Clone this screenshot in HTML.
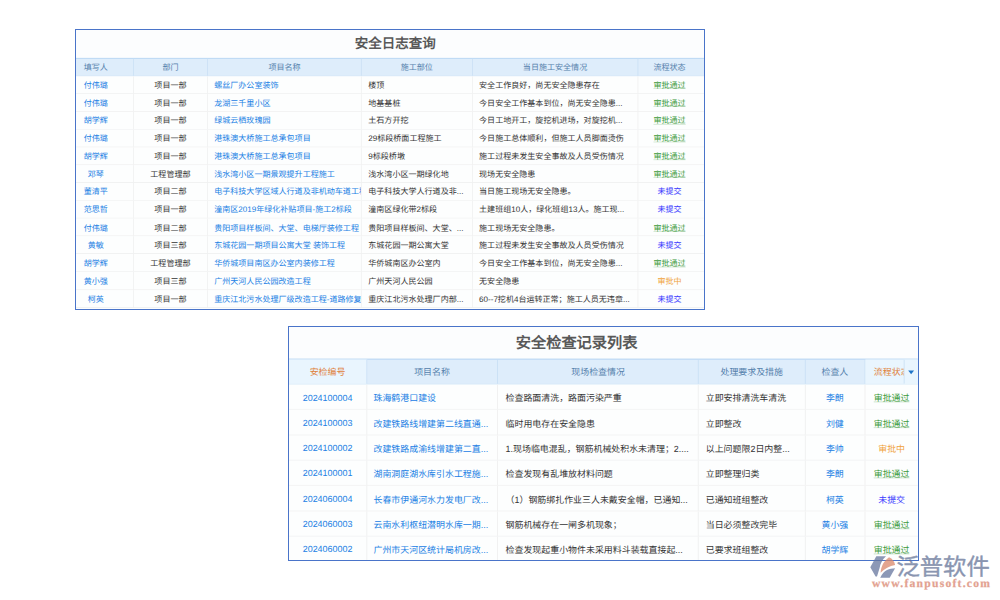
<!DOCTYPE html>
<html lang="zh-CN"><head><meta charset="utf-8"><title>安全日志查询</title>
<style>
*{box-sizing:border-box;margin:0;padding:0}
html,body{width:1000px;height:600px;background:#fff;overflow:hidden}
body{position:relative;font-family:"Liberation Sans",sans-serif;font-size:12px;color:#333;text-rendering:geometricPrecision}
.frame{position:absolute;border:1px solid #4a74c9;background:#fcfdfe;overflow:hidden}
.sc{position:absolute;left:0;top:0;transform-origin:0 0}
.title{text-align:center;font-weight:bold;color:#585858;white-space:nowrap}
.hd{display:flex;background:#deedfb;border-top:1px solid #a9cdf0;border-bottom:1px solid #d2e4f5;color:#5480ab;white-space:nowrap}
.hd .c{border-right:1px solid #c5ddf3}
.hd .c.hov{background:#e9f5fe;color:#e0813a}
.rw{display:flex;border-bottom:1px solid #ebebeb;white-space:nowrap;background:#fdfefe}
.c{flex:none;text-align:center;overflow:hidden;border-right:1px solid #ececec;position:relative}
.c:last-child{border-right:0}
.c.l{text-align:left}
.lk{color:#2180e4}
.sg{color:#3b9a3b;text-decoration:underline;text-decoration-color:rgba(59,154,59,.32);text-underline-offset:1px}
.sb{color:#3a3aff}
.so{color:#f0a23c}
.nm{position:relative;top:-0.8px}
.trg{position:absolute;right:0;top:0;bottom:0;border-left:1px solid #c5ddf3;background:#e9f5fe;display:block}
.trg b{position:absolute;left:50%;top:50%;margin:-1.9px 0 0 -4.2px;width:0;height:0;border-left:4.5px solid transparent;border-right:4.5px solid transparent;border-top:5.8px solid #1f74c8}
.wm{position:absolute;left:0;top:0;width:1000px;height:600px;pointer-events:none;opacity:.75}
.lg{position:absolute;left:866px;top:552px}
.wt{position:absolute;left:896.5px;top:553px;font-size:23.3px;line-height:28px;color:#637296;font-weight:500;white-space:nowrap;letter-spacing:0;-webkit-text-stroke:.4px #637296}
.wu{position:absolute;left:872px;top:577.1px;font-family:"Liberation Serif",serif;font-weight:bold;font-size:11.6px;line-height:13px;color:#d9836c;white-space:nowrap;letter-spacing:1.25px;-webkit-text-stroke:.25px #d9836c}
.p1 .hd{height:28.837px}.p1 .hd .c{line-height:25.261px;padding-top:1.576px}.p1 .rw{height:28.049px}.p1 .rw .c{line-height:24.843px;padding-top:2.206px}
.p2 .hd{height:35.23px}.p2 .hd .c{line-height:31.333px;padding-top:1.897px}.p2 .rw{height:34.309px}.p2 .rw .c{line-height:28.973px;padding-top:4.336px}
</style></head>
<body>
<div class="frame p1" style="left:75px;top:29px;width:630px;height:281px">
<div class="sc" style="width:989.599px;transform:scale(0.6346);font-size:12.685px">
<div class="title" style="height:44.122px;line-height:44.122px;font-size:21.3px;padding-left:16.703px">安全日志查询</div>
<div class="hd">
<div class="c" style="width:90.766px;padding-right:27.576px;">填写人</div>
<div class="c" style="width:117.082px;">部门</div>
<div class="c" style="width:242.357px;">项目名称</div>
<div class="c" style="width:174.598px;">施工部位</div>
<div class="c" style="width:261.109px;">当日施工安全情况</div>
<div class="c" style="width:103.687px;padding-right:4.727px;">流程状态</div>
</div>
<div class="rw">
<div class="c lk" style="width:90.766px;padding-right:27.576px">付伟璐</div>
<div class="c" style="width:117.082px;">项目一部</div>
<div class="c l lk" style="width:242.357px;padding-left:9.928px;padding-right:0">螺丝厂办公室装饰</div>
<div class="c l" style="width:174.598px;padding-left:10.4px;padding-right:0">楼顶</div>
<div class="c l" style="width:261.109px;padding-left:10.4px;padding-right:0">安全工作良好，尚无安全隐患存在</div>
<div class="c" style="width:103.687px;padding-right:4.727px"><span class="sg">审批通过</span></div>
</div>
<div class="rw">
<div class="c lk" style="width:90.766px;padding-right:27.576px">付伟璐</div>
<div class="c" style="width:117.082px;">项目一部</div>
<div class="c l lk" style="width:242.357px;padding-left:9.928px;padding-right:0">龙湖三千里小区</div>
<div class="c l" style="width:174.598px;padding-left:10.4px;padding-right:0">地基基桩</div>
<div class="c l" style="width:261.109px;padding-left:10.4px;padding-right:0">今日安全工作基本到位，尚无安全隐患...</div>
<div class="c" style="width:103.687px;padding-right:4.727px"><span class="sg">审批通过</span></div>
</div>
<div class="rw">
<div class="c lk" style="width:90.766px;padding-right:27.576px">胡学辉</div>
<div class="c" style="width:117.082px;">项目一部</div>
<div class="c l lk" style="width:242.357px;padding-left:9.928px;padding-right:0">绿城云栖玫瑰园</div>
<div class="c l" style="width:174.598px;padding-left:10.4px;padding-right:0">土石方开挖</div>
<div class="c l" style="width:261.109px;padding-left:10.4px;padding-right:0">今日工地开工，旋挖机进场，对旋挖机...</div>
<div class="c" style="width:103.687px;padding-right:4.727px"><span class="sg">审批通过</span></div>
</div>
<div class="rw">
<div class="c lk" style="width:90.766px;padding-right:27.576px">付伟璐</div>
<div class="c" style="width:117.082px;">项目一部</div>
<div class="c l lk" style="width:242.357px;padding-left:9.928px;padding-right:0">港珠澳大桥施工总承包项目</div>
<div class="c l" style="width:174.598px;padding-left:10.4px;padding-right:0">29标段桥面工程施工</div>
<div class="c l" style="width:261.109px;padding-left:10.4px;padding-right:0">今日施工总体顺利，但施工人员脚面烫伤</div>
<div class="c" style="width:103.687px;padding-right:4.727px"><span class="sg">审批通过</span></div>
</div>
<div class="rw">
<div class="c lk" style="width:90.766px;padding-right:27.576px">胡学辉</div>
<div class="c" style="width:117.082px;">项目一部</div>
<div class="c l lk" style="width:242.357px;padding-left:9.928px;padding-right:0">港珠澳大桥施工总承包项目</div>
<div class="c l" style="width:174.598px;padding-left:10.4px;padding-right:0">9标段桥墩</div>
<div class="c l" style="width:261.109px;padding-left:10.4px;padding-right:0">施工过程未发生安全事故及人员受伤情况</div>
<div class="c" style="width:103.687px;padding-right:4.727px"><span class="sg">审批通过</span></div>
</div>
<div class="rw">
<div class="c lk" style="width:90.766px;padding-right:27.576px">邓琴</div>
<div class="c" style="width:117.082px;">工程管理部</div>
<div class="c l lk" style="width:242.357px;padding-left:9.928px;padding-right:0">浅水湾小区一期景观提升工程施工</div>
<div class="c l" style="width:174.598px;padding-left:10.4px;padding-right:0">浅水湾小区一期绿化地</div>
<div class="c l" style="width:261.109px;padding-left:10.4px;padding-right:0">现场无安全隐患</div>
<div class="c" style="width:103.687px;padding-right:4.727px"><span class="sg">审批通过</span></div>
</div>
<div class="rw">
<div class="c lk" style="width:90.766px;padding-right:27.576px">董清平</div>
<div class="c" style="width:117.082px;">项目二部</div>
<div class="c l lk" style="width:242.357px;padding-left:9.928px;padding-right:0">电子科技大学区域人行道及非机动车道工程</div>
<div class="c l" style="width:174.598px;padding-left:10.4px;padding-right:0">电子科技大学人行道及非...</div>
<div class="c l" style="width:261.109px;padding-left:10.4px;padding-right:0">当日施工现场无安全隐患。</div>
<div class="c" style="width:103.687px;padding-right:4.727px"><span class="sb">未提交</span></div>
</div>
<div class="rw">
<div class="c lk" style="width:90.766px;padding-right:27.576px">范思哲</div>
<div class="c" style="width:117.082px;">项目一部</div>
<div class="c l lk" style="width:242.357px;padding-left:9.928px;padding-right:0">潼南区2019年绿化补贴项目-施工2标段</div>
<div class="c l" style="width:174.598px;padding-left:10.4px;padding-right:0">潼南区绿化带2标段</div>
<div class="c l" style="width:261.109px;padding-left:10.4px;padding-right:0">土建班组10人，绿化班组13人。施工现...</div>
<div class="c" style="width:103.687px;padding-right:4.727px"><span class="sb">未提交</span></div>
</div>
<div class="rw">
<div class="c lk" style="width:90.766px;padding-right:27.576px">付伟璐</div>
<div class="c" style="width:117.082px;">项目二部</div>
<div class="c l lk" style="width:242.357px;padding-left:9.928px;padding-right:0">贵阳项目样板间、大堂、电梯厅装修工程</div>
<div class="c l" style="width:174.598px;padding-left:10.4px;padding-right:0">贵阳项目样板间、大堂、...</div>
<div class="c l" style="width:261.109px;padding-left:10.4px;padding-right:0">施工现场无安全隐患。</div>
<div class="c" style="width:103.687px;padding-right:4.727px"><span class="sg">审批通过</span></div>
</div>
<div class="rw">
<div class="c lk" style="width:90.766px;padding-right:27.576px">黄敏</div>
<div class="c" style="width:117.082px;">项目三部</div>
<div class="c l lk" style="width:242.357px;padding-left:9.928px;padding-right:0">东城花园一期项目公寓大堂 装饰工程</div>
<div class="c l" style="width:174.598px;padding-left:10.4px;padding-right:0">东城花园一期公寓大堂</div>
<div class="c l" style="width:261.109px;padding-left:10.4px;padding-right:0">施工过程未发生安全事故及人员受伤情况</div>
<div class="c" style="width:103.687px;padding-right:4.727px"><span class="sb">未提交</span></div>
</div>
<div class="rw">
<div class="c lk" style="width:90.766px;padding-right:27.576px">胡学辉</div>
<div class="c" style="width:117.082px;">工程管理部</div>
<div class="c l lk" style="width:242.357px;padding-left:9.928px;padding-right:0">华侨城项目南区办公室内装修工程</div>
<div class="c l" style="width:174.598px;padding-left:10.4px;padding-right:0">华侨城南区办公室内</div>
<div class="c l" style="width:261.109px;padding-left:10.4px;padding-right:0">今日安全工作基本到位，尚无安全隐患...</div>
<div class="c" style="width:103.687px;padding-right:4.727px"><span class="sg">审批通过</span></div>
</div>
<div class="rw">
<div class="c lk" style="width:90.766px;padding-right:27.576px">黄小强</div>
<div class="c" style="width:117.082px;">项目三部</div>
<div class="c l lk" style="width:242.357px;padding-left:9.928px;padding-right:0">广州天河人民公园改造工程</div>
<div class="c l" style="width:174.598px;padding-left:10.4px;padding-right:0">广州天河人民公园</div>
<div class="c l" style="width:261.109px;padding-left:10.4px;padding-right:0">无安全隐患</div>
<div class="c" style="width:103.687px;padding-right:4.727px"><span class="so">审批中</span></div>
</div>
<div class="rw">
<div class="c lk" style="width:90.766px;padding-right:27.576px">柯英</div>
<div class="c" style="width:117.082px;">项目一部</div>
<div class="c l lk" style="width:242.357px;padding-left:9.928px;padding-right:0">重庆江北污水处理厂级改造工程-道路修复</div>
<div class="c l" style="width:174.598px;padding-left:10.4px;padding-right:0">重庆江北污水处理厂内部...</div>
<div class="c l" style="width:261.109px;padding-left:10.4px;padding-right:0">60--7挖机4台运转正常；施工人员无违章...</div>
<div class="c" style="width:103.687px;padding-right:4.727px"><span class="sb">未提交</span></div>
</div>
</div></div>
<div class="frame p2" style="left:288px;top:326px;width:631px;height:235px">
<div class="sc" style="width:852.304px;transform:scale(0.738);font-size:12.127px">
<div class="title" style="height:42.818px;line-height:40.65px;padding-top:2.168px;font-size:20.6px;padding-right:72.9px">安全检查记录列表</div>
<div class="hd">
<div class="c hov" style="width:105.515px;">安检编号</div>
<div class="c" style="width:177.642px;">项目名称</div>
<div class="c" style="width:272.358px;">现场检查情况</div>
<div class="c" style="width:144.038px;">处理要求及措施</div>
<div class="c" style="width:81.301px;">检查人</div>
<div class="c hov l" style="width:71.45px;padding-left:11.653px;padding-right:18.97px;text-overflow:clip">流程状态<i class="trg" style="width:18.862px"><b></b></i></div>
</div>
<div class="rw">
<div class="c lk" style="width:105.515px;"><span class="nm">2024100004</span></div>
<div class="c l lk" style="width:177.642px;padding-left:8.943px;padding-right:0">珠海鹤港口建设</div>
<div class="c l" style="width:272.358px;padding-left:10.298px;padding-right:0">检查路面清洗，路面污染严重</div>
<div class="c l" style="width:144.038px;padding-left:9.214px;padding-right:0">立即安排清洗车清洗</div>
<div class="c lk" style="width:81.301px;">李朗</div>
<div class="c" style="width:71.45px;"><span class="sg">审批通过</span></div>
</div>
<div class="rw">
<div class="c lk" style="width:105.515px;"><span class="nm">2024100003</span></div>
<div class="c l lk" style="width:177.642px;padding-left:8.943px;padding-right:0">改建铁路线增建第二线直通...</div>
<div class="c l" style="width:272.358px;padding-left:10.298px;padding-right:0">临时用电存在安全隐患</div>
<div class="c l" style="width:144.038px;padding-left:9.214px;padding-right:0">立即整改</div>
<div class="c lk" style="width:81.301px;">刘健</div>
<div class="c" style="width:71.45px;"><span class="sg">审批通过</span></div>
</div>
<div class="rw">
<div class="c lk" style="width:105.515px;"><span class="nm">2024100002</span></div>
<div class="c l lk" style="width:177.642px;padding-left:8.943px;padding-right:0">改建铁路成渝线增建第二直...</div>
<div class="c l" style="width:272.358px;padding-left:10.298px;padding-right:0">1.现场临电混乱，钢筋机械处积水未清理；2....</div>
<div class="c l" style="width:144.038px;padding-left:9.214px;padding-right:0">以上问题限2日内整...</div>
<div class="c lk" style="width:81.301px;">李帅</div>
<div class="c" style="width:71.45px;"><span class="so">审批中</span></div>
</div>
<div class="rw">
<div class="c lk" style="width:105.515px;"><span class="nm">2024100001</span></div>
<div class="c l lk" style="width:177.642px;padding-left:8.943px;padding-right:0">湖南洞庭湖水库引水工程施...</div>
<div class="c l" style="width:272.358px;padding-left:10.298px;padding-right:0">检查发现有乱堆放材料问题</div>
<div class="c l" style="width:144.038px;padding-left:9.214px;padding-right:0">立即整理归类</div>
<div class="c lk" style="width:81.301px;">李朗</div>
<div class="c" style="width:71.45px;"><span class="sg">审批通过</span></div>
</div>
<div class="rw">
<div class="c lk" style="width:105.515px;"><span class="nm">2024060004</span></div>
<div class="c l lk" style="width:177.642px;padding-left:8.943px;padding-right:0">长春市伊通河水力发电厂改...</div>
<div class="c l" style="width:272.358px;padding-left:10.298px;padding-right:0">（1）钢筋绑扎作业三人未戴安全帽，已通知...</div>
<div class="c l" style="width:144.038px;padding-left:9.214px;padding-right:0">已通知班组整改</div>
<div class="c lk" style="width:81.301px;">柯英</div>
<div class="c" style="width:71.45px;"><span class="sb">未提交</span></div>
</div>
<div class="rw">
<div class="c lk" style="width:105.515px;"><span class="nm">2024060003</span></div>
<div class="c l lk" style="width:177.642px;padding-left:8.943px;padding-right:0">云南水利枢纽潜明水库一期...</div>
<div class="c l" style="width:272.358px;padding-left:10.298px;padding-right:0">钢筋机械存在一闸多机现象；</div>
<div class="c l" style="width:144.038px;padding-left:9.214px;padding-right:0">当日必须整改完毕</div>
<div class="c lk" style="width:81.301px;">黄小强</div>
<div class="c" style="width:71.45px;"><span class="sg">审批通过</span></div>
</div>
<div class="rw">
<div class="c lk" style="width:105.515px;"><span class="nm">2024060002</span></div>
<div class="c l lk" style="width:177.642px;padding-left:8.943px;padding-right:0">广州市天河区统计局机房改...</div>
<div class="c l" style="width:272.358px;padding-left:10.298px;padding-right:0">检查发现起重小物件未采用料斗装载直接起...</div>
<div class="c l" style="width:144.038px;padding-left:9.214px;padding-right:0">已要求班组整改</div>
<div class="c lk" style="width:81.301px;">胡学辉</div>
<div class="c" style="width:71.45px;"><span class="sg">审批通过</span></div>
</div>
</div></div>

<div class="wm">
<svg class="lg" width="34" height="30" viewBox="866 552 34 30">
 <path d="M876.3 556.2 L886 556.2 C882.5 559.5 880.2 563.5 879.6 568 L877 576.4 L875.6 576.4 L870.3 567.3 Z" fill="#66769e"/>
 <path d="M889 557.2 C892.5 558.6 894.6 561.6 895.1 565 C889.5 566 884.5 568.8 880.6 572.8 C881 566.2 884 560.6 889 557.2 Z" fill="#da886a"/>
 <path d="M895.1 568.2 L889.7 577.7 L880.2 577.7 C881.8 574 884.2 571.5 887 570 C889.5 568.9 892.3 568.3 895.1 568.2 Z" fill="#66769e"/>
</svg>
<div class="wt">泛普软件</div>
<div class="wu">www.fanpusoft.com</div>
</div>

</body></html>
